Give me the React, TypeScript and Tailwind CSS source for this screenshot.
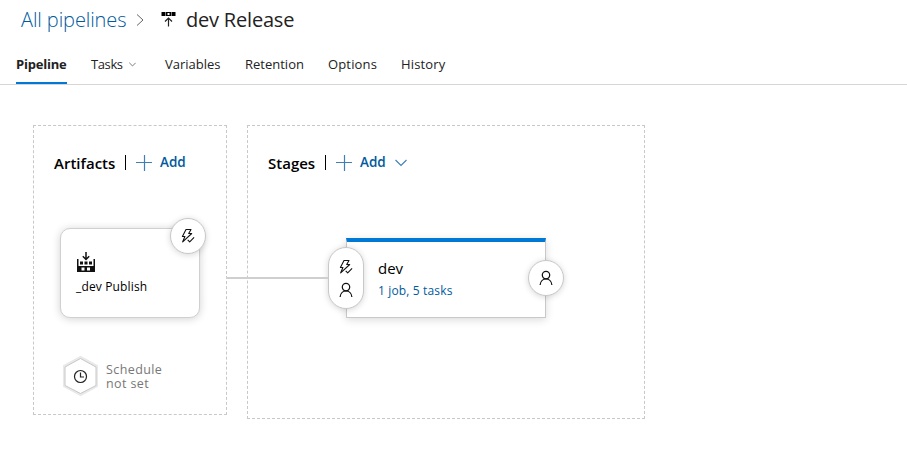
import type { ReactNode } from "react";

function Bolt() {
  return (
    <svg width="16" height="16" viewBox="0 0 16 16" fill="none" stroke="#111" strokeWidth="1.1" strokeLinejoin="round">
      <path d="M6 1.500h5L8.700 5.500h3L2.700 13.800l2.200-5.300H2.400z" />
      <path d="M7.700 11.800l2 2 4.400-4.400" />
    </svg>
  );
}

function Person() {
  return (
    <svg width="16" height="16" viewBox="0 0 16 16" fill="none" stroke="#111" strokeWidth="1.25">
      <circle cx="8" cy="5.1" r="3.7" />
      <path d="M2.1 15c.3-3.600 2.800-6.100 5.900-6.100s5.600 2.500 5.900 6.100" />
    </svg>
  );
}

function Plus() {
  return (
    <svg width="16" height="16" viewBox="0 0 16 16" fill="none" stroke="#3f7fb5" strokeWidth="1.2">
      <path d="M0 7.500h16M8.500 0v16" />
    </svg>
  );
}

function Chevron({ size, color }: { size: number; color: string }) {
  return (
    <svg width={size} height={size} viewBox="0 0 12 12" fill="none" stroke={color} strokeWidth="1.100">
      <path d="M.5 3L6 8.500 11.500 3" />
    </svg>
  );
}

function Tab({ children, className = "" }: { children: ReactNode; className?: string }) {
  return <div className={`flex h-[41px] shrink-0 items-center whitespace-nowrap ${className}`}>{children}</div>;
}

export default function App() {
  return (
    <div className="h-[476px] w-[907px] overflow-hidden bg-white font-['Open_Sans','Noto_Sans',sans-serif] text-[#222]">
      <header className="flex h-[43px] items-start pl-[21px] pt-[5px] text-[20px] leading-[30px] whitespace-nowrap">
        <span className="w-[115px] font-light tracking-[-0.1px] text-[#005a9e]">All pipelines</span>
        <svg width="9" height="14" viewBox="0 0 9 14" fill="none" stroke="#666" strokeWidth="1" className="mt-2">
          <path d="M1 1.500L7 7l-6 5.500" />
        </svg>
        <svg width="15" height="15" viewBox="0 0 15 15" className="mt-[7px] ml-[16px]">
          <path fill="#000" fillRule="evenodd" d="M.5 0h4v4h-4zM5 0h5v4H5zM6.500 1v2h2V1zM10.500 0h4v4h-4z" />
          <path d="M7.500 14.500V6.500M4 9.500L7.500 6 11 9.500" fill="none" stroke="#222" strokeWidth="1.200" />
        </svg>
        <span className="ml-[10px] tracking-[-0.2px]">dev Release</span>
      </header>
      <nav className="flex h-[42px] border-b border-[#d6d6d6] pl-4 text-[13px]">
        <Tab className="w-[51px] border-b-2 border-[#0078d4] pt-[4px] font-bold tracking-[-0.2px]">Pipeline</Tab>
        <Tab className="ml-6 w-[74px] gap-[6px] pt-[2px] tracking-[-0.4px]">
          Tasks <Chevron size={7} color="#333" />
        </Tab>
        <Tab className="w-[80px] pt-[2px]">Variables</Tab>
        <Tab className="w-[83px] pt-[2px]">Retention</Tab>
        <Tab className="w-[73px] pt-[2px] tracking-[0.15px]">Options</Tab>
        <Tab className="pt-[2px] tracking-[0.15px]">History</Tab>
      </nav>
      <main className="relative flex items-start gap-5 pl-[33px] pt-10">
        <section className="h-[290px] w-[194px] border border-dashed border-[#c8c8c8]">
          <div className="flex h-[75px] items-center pl-5 text-[15px] font-semibold text-black">
            <span className="w-[71px]">Artifacts</span>
            <i className="mb-[3px] h-[15px] w-px bg-black" />
            <div className="mb-[2px] ml-[10px] flex items-center gap-2 text-[13.500px] text-[#005a9e]">
              <Plus />
              <span>Add</span>
            </div>
          </div>
          <div className="relative mt-[27px] ml-[26px] h-[90px] w-[140px] rounded-[10px] border border-[#d0d0d0] bg-white pt-[23px] pl-[15px] shadow-[0_1px_8px_rgba(0,0,0,0.18)]">
            <svg width="20" height="21" viewBox="0 0 20 21">
              <path fill="#111" fillRule="evenodd" d="M1 7h1.500v7h15V7H19v13H1zM5.500 15.500v3h3v-3zM11 15.500v3h3v-3z" />
              <path fill="#111" d="M4 9.500h3v3H4zM8.500 9.500h3v3h-3zM13 9.500h3v3h-3z" />
              <path d="M10 0v7M6.800 4.300L10 7.500l3.200-3.200" fill="none" stroke="#111" strokeWidth="1.500" />
            </svg>
            <p className="mt-[6px] text-[12px] leading-4 tracking-[0.15px] whitespace-nowrap text-black">_dev Publish</p>
            <div className="absolute -top-[11px] left-[109px] grid h-9 w-9 place-items-center rounded-full border border-[#c8c8c8] bg-white shadow-[0_1px_6px_rgba(0,0,0,0.16)]">
              <Bolt />
            </div>
          </div>
          <div className="mt-[37px] ml-[28px] flex items-center gap-[7px]">
            <svg width="37" height="42" viewBox="0 0 37 42" fill="none">
              <path d="M18.500 3L34 11.500v19L18.500 39 3 30.500v-19z" stroke="#e9e9e9" strokeWidth="4" />
              <path d="M18.500 3.500L34 12v18.500L18.500 38.500 3 30.500V12z" fill="#fff" stroke="#c8c8c8" />
              <circle cx="18.500" cy="21.500" r="6" stroke="#222" strokeWidth="1.200" />
              <path d="M18.500 17.500v4.500h3.500" stroke="#222" strokeWidth="1.200" />
            </svg>
            <p className="pt-[2px] text-[12.500px] leading-[14px] tracking-[0.4px] text-[#777]">Schedule<br />not set</p>
          </div>
        </section>
        <section className="h-[294px] w-[398px] border border-dashed border-[#c8c8c8]">
          <div className="flex h-[75px] items-center pl-5 text-[15px] font-semibold text-black">
            <span className="w-[57px]">Stages</span>
            <i className="mb-[3px] h-[15px] w-px bg-black" />
            <div className="mb-[2px] ml-[10px] flex items-center gap-2 text-[13.500px] text-[#005a9e]">
              <Plus />
              <span className="w-[27px]">Add</span>
              <Chevron size={12} color="#3f7fb5" />
            </div>
          </div>
          <div className="relative mt-[37px] ml-[98px] h-[80px] w-[200px] border border-t-4 border-[#c8c8c8] border-t-[#0078d4] bg-white pt-[15px] pl-[31px] shadow-[0_2px_8px_rgba(0,0,0,0.14)]">
            <p className="text-[15px] leading-[22px] text-black">dev</p>
            <p className="mt-[4px] text-[12px] leading-4 tracking-[0.15px] text-[#005a9e]">1 job, 5 tasks</p>
            <div className="absolute top-[5px] -left-[19px] flex h-[62px] w-9 flex-col items-center justify-center gap-[7px] rounded-full border border-[#c8c8c8] bg-white shadow-[0_1px_6px_rgba(0,0,0,0.16)]">
              <Bolt />
              <Person />
            </div>
            <div className="absolute top-[18px] left-[181px] grid h-9 w-9 place-items-center rounded-full border border-[#c8c8c8] bg-white shadow-[0_1px_6px_rgba(0,0,0,0.16)]">
              <Person />
            </div>
          </div>
        </section>
        <div className="absolute top-[192px] left-[226px] h-[2px] w-[102px] bg-[#cfcfcf]" />
      </main>
    </div>
  );
}
